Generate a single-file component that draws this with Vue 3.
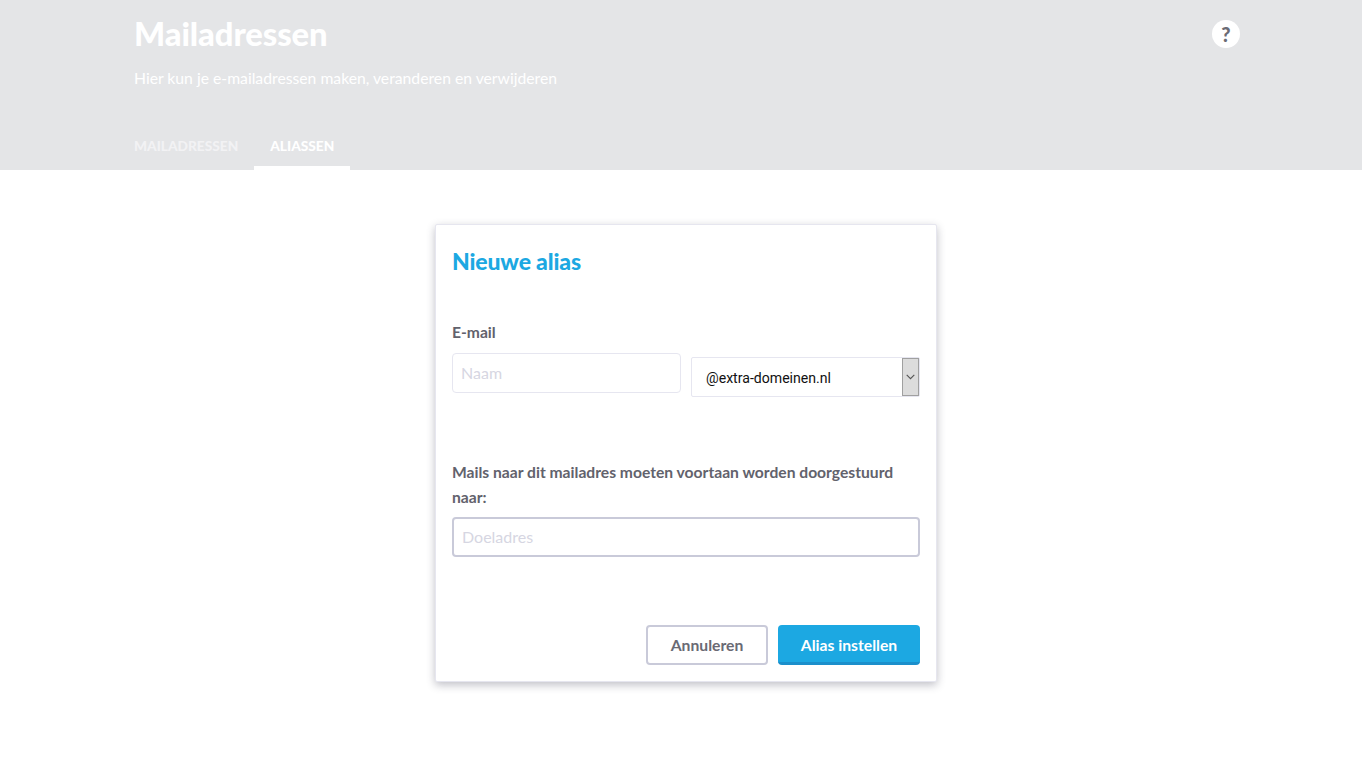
<template>
  <div class="page">
    <header class="head">
      <div class="head-inner">
        <div class="head-top">
          <h1>Mailadressen</h1>
          <span class="help">?</span>
        </div>
        <p class="sub">Hier kun je e-mailadressen maken, veranderen en verwijderen</p>
        <nav class="tabs">
          <a class="tab">MAILADRESSEN</a>
          <a class="tab active">ALIASSEN</a>
        </nav>
      </div>
    </header>
    <main class="main">
      <form class="card" @submit.prevent>
        <h2>Nieuwe alias</h2>
        <label class="lab first">E-mail</label>
        <div class="row">
          <input class="inp thin" placeholder="Naam" />
          <div class="sel">
            <span class="sel-text">@extra-domeinen.nl</span>
            <span class="sel-btn">
              <svg width="9" height="6" viewBox="0 0 9 6"><path d="M.7.9l3.8 3.8L8.3.9" fill="none" stroke="#555" stroke-width="1.1"/></svg>
            </span>
          </div>
        </div>
        <label class="lab second">Mails naar dit mailadres moeten voortaan worden doorgestuurd naar:</label>
        <input class="inp thick" placeholder="Doeladres" />
        <div class="actions">
          <button type="button" class="btn ghost">Annuleren</button>
          <button type="submit" class="btn primary">Alias instellen</button>
        </div>
      </form>
    </main>
  </div>
</template>

<script setup>
</script>

<style>
html, body { margin: 0; background: #fff; }
</style>

<style scoped>
.page { font-family: Lato, "Liberation Sans", sans-serif; min-height: 776px; background: #fff; }
.head { background: #e4e5e7; height: 170px; color: #fff; }
.head-inner { width: 1106px; margin-left: 134px; height: 170px; display: flex; flex-direction: column; }
.head-top { display: flex; justify-content: space-between; align-items: center; height: 48px; margin-top: 10px; }
h1 { margin: 0; font-size: 32.8px; line-height: 48px; font-weight: 900; letter-spacing: -.1px; }
.help { width: 28px; height: 28px; border-radius: 50%; background: #fff; color: #6b6b75; font-weight: 900; font-size: 20px; line-height: 28px; text-align: center; }
.sub { margin: 8px 0 0; font-size: 15.73px; line-height: 24px; color: #fff; }
.tabs { margin-top: auto; margin-left: -16px; display: flex; }
.tab { font-size: 13.7px; font-weight: 900; line-height: 20px; padding: 0 16px 10px; color: #f2f2f4; border-bottom: 4px solid transparent; }
.tab.active { color: #fff; border-bottom-color: #fff; }
.main { display: flex; justify-content: center; padding-top: 54px; padding-left: 10px; }
.card { width: 502px; height: 458px; box-sizing: border-box; padding: 0 16px; background: #fff; border: 1px solid #e6e6ef; border-radius: 2px; box-shadow: 0 3px 8px rgba(60, 60, 80, .32); display: flex; flex-direction: column; }
h2 { margin: 20px 0 0; font-size: 23px; line-height: 32px; font-weight: 900; letter-spacing: -.15px; color: #1ca8e2; }
.lab { display: block; font-size: 15.65px; font-weight: 700; line-height: 25px; color: #62626c; }
.lab.first { margin-top: 43px; }
.lab.second { margin-top: 63px; }
.row { display: flex; gap: 10px; margin-top: 8px; align-items: flex-start; }
.inp { box-sizing: border-box; height: 40px; border-radius: 4px; background: #fff; font: 400 16px Lato, sans-serif; padding: 0 8px 2px; outline: none; color: #62626c; }
.inp::placeholder { color: #d6d6e2; opacity: 1; }
.thin { width: 229px; border: 1px solid #e6e6f0; }
.thick { width: 468px; border: 2px solid #c9cad9; margin-top: 7px; }
.sel { box-sizing: border-box; width: 229px; height: 40px; margin-top: 4px; border: 1px solid #e6e6f0; display: flex; align-items: stretch; border-radius: 2px; }
.sel-text { flex: 1; font: 400 14.1px/40px Roboto, "Noto Sans", sans-serif; color: #111; padding-left: 14px; }
.sel-btn { box-sizing: border-box; width: 17px; background: #dcdcdc; border: 1px solid #a0a0a0; display: flex; align-items: center; justify-content: center; }
.actions { margin-top: auto; margin-bottom: 16px; display: flex; justify-content: flex-end; gap: 10px; }
.btn { box-sizing: border-box; height: 40px; border-radius: 4px; font: 700 15.7px Lato, sans-serif; cursor: pointer; padding: 0; }
.ghost { width: 122px; background: #fff; border: 2px solid #c9cad9; color: #6a6a74; }
.primary { width: 142px; background: #1ca8e2; border: 0; border-bottom: 3px solid #1b8fcb; color: #fff; padding-top: 2px; }
</style>
